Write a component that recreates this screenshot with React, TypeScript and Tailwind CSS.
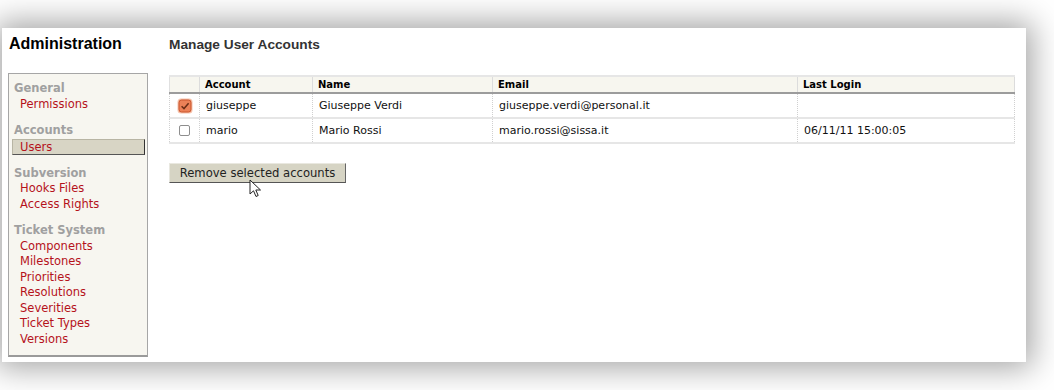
import React from "react";

const groups: { title: string; items: string[] }[] = [
  { title: "General", items: ["Permissions"] },
  { title: "Accounts", items: ["Users"] },
  { title: "Subversion", items: ["Hooks Files", "Access Rights"] },
  {
    title: "Ticket System",
    items: ["Components", "Milestones", "Priorities", "Resolutions", "Severities", "Ticket Types", "Versions"],
  },
];

const rows = [
  { checked: true, account: "giuseppe", name: "Giuseppe Verdi", email: "giuseppe.verdi@personal.it", last: "" },
  { checked: false, account: "mario", name: "Mario Rossi", email: "mario.rossi@sissa.it", last: "06/11/11 15:00:05" },
];

function CheckedBox() {
  return (
    <svg width="16" height="16" viewBox="0 0 16 16">
      <rect x="0.5" y="0.5" width="15" height="15" rx="3.5" fill="#f6c2ab" />
      <rect x="2" y="2" width="12" height="12" rx="2.5" fill="#ec8158" stroke="#c9552c" strokeWidth="1" />
      <path d="M4.6 8.2 L7 10.6 L11.6 5.2" fill="none" stroke="#6b2d16" strokeWidth="1.5" />
    </svg>
  );
}

function EmptyBox() {
  return <div className="w-[11px] h-[11px] rounded-[2px] border border-[#8e8e8e] bg-white" />;
}

function Cursor() {
  return (
    <svg width="14" height="20" viewBox="0 0 14 20" className="absolute left-[80px] top-[16px]">
      <path d="M1 1 L1 15 L4.5 11.8 L7 17.5 L9.2 16.5 L6.8 11 L11.5 11 Z" fill="white" stroke="#222" strokeWidth="1" strokeLinejoin="round" />
    </svg>
  );
}

export default function App() {
  return (
    <div
      className="w-[1054px] h-[390px] overflow-hidden bg-white pt-[28px] pl-[2px]"
      style={{ fontFamily: '"DejaVu Sans", Verdana, sans-serif' }}
    >
      <div className="w-[1024px] h-[334px] bg-white shadow-[0_0_30px_6px_rgba(0,0,0,0.36)] flex">
        {/* Left column */}
        <div className="w-[167px] shrink-0 pl-[6px]">
          <div
            className="pl-[1px] pt-[6px] h-[45px] text-[16px] leading-[19px] font-bold text-black"
            style={{ fontFamily: '"Liberation Sans", Arial, sans-serif' }}
          >
            Administration
          </div>
          <div className="w-[140px] h-[284px] bg-[#f7f6f0] border border-[#a6a6a6] border-b-2 border-b-[#9a9a9a] pt-[7px] text-[11.5px] leading-[15.5px]">
            {groups.map((g, gi) => (
              <div key={g.title} className={gi > 0 ? "mt-[11px]" : ""}>
                <div className="pl-[5px] font-bold text-[#a0a0a0]">{g.title}</div>
                {g.items.map((it) =>
                  it === "Users" ? (
                    <div
                      key={it}
                      className="ml-[3px] mr-[2px] h-[16px] leading-[14px] pl-[7px] text-[#b5121b] bg-[#d8d5c5] border border-[#b8b5a4] border-r-[#333] border-b-[#555]"
                    >
                      {it}
                    </div>
                  ) : (
                    <div key={it} className="pl-[11px] text-[#b5121b]">
                      {it}
                    </div>
                  )
                )}
              </div>
            ))}
          </div>
        </div>

        {/* Main */}
        <div className="flex-1 pr-[9px]">
          <div
            className="pt-[8px] h-[47px] text-[13.7px] leading-[17px] font-bold text-[#333]"
            style={{ fontFamily: '"Liberation Sans", Arial, sans-serif' }}
          >
            Manage User Accounts
          </div>
          <div className="w-[846px] border-t-2 border-[#e6e6e6]">
            <div className="flex h-[17px] bg-[#f7f6ef] border-b-2 border-[#9c9c9c] text-[10px] font-bold text-black leading-[15px]">
              <div className="w-[30px] border-l border-[#e0e0e0]" />
              <div className="w-[113px] border-l border-[#dcdcdc] pl-[5px]">Account</div>
              <div className="w-[180px] border-l border-[#dcdcdc] pl-[5px]">Name</div>
              <div className="w-[305px] border-l border-[#dcdcdc] pl-[5px]">Email</div>
              <div className="w-[218px] border-l border-r border-[#dcdcdc] pl-[5px]">Last Login</div>
            </div>
            {rows.map((r) => (
              <div key={r.account} className="flex h-[25px] border-b-2 border-[#e6e6e6] text-[11px] text-[#111] leading-[23px]">
                <div className="w-[30px] border-l border-dotted border-[#d0d0d0] flex items-center justify-center">
                  {r.checked ? <CheckedBox /> : <EmptyBox />}
                </div>
                <div className="w-[113px] border-l border-dotted border-[#d0d0d0] pl-[6px]">{r.account}</div>
                <div className="w-[180px] border-l border-dotted border-[#d0d0d0] pl-[6px]">{r.name}</div>
                <div className="w-[305px] border-l border-dotted border-[#d0d0d0] pl-[6px]">{r.email}</div>
                <div className="w-[218px] border-l border-r border-dotted border-[#d0d0d0] pl-[6px]">{r.last}</div>
              </div>
            ))}
          </div>
          <div className="relative mt-[19px] w-[177px]">
            <div className="h-[20px] w-[177px] bg-[#d6d4c4] border border-[#e9e8e0] border-r-[#666] border-b-[#555] text-[11.6px] leading-[18px] text-[#222] text-center">
              Remove selected accounts
            </div>
            <Cursor />
          </div>
        </div>
      </div>
    </div>
  );
}
